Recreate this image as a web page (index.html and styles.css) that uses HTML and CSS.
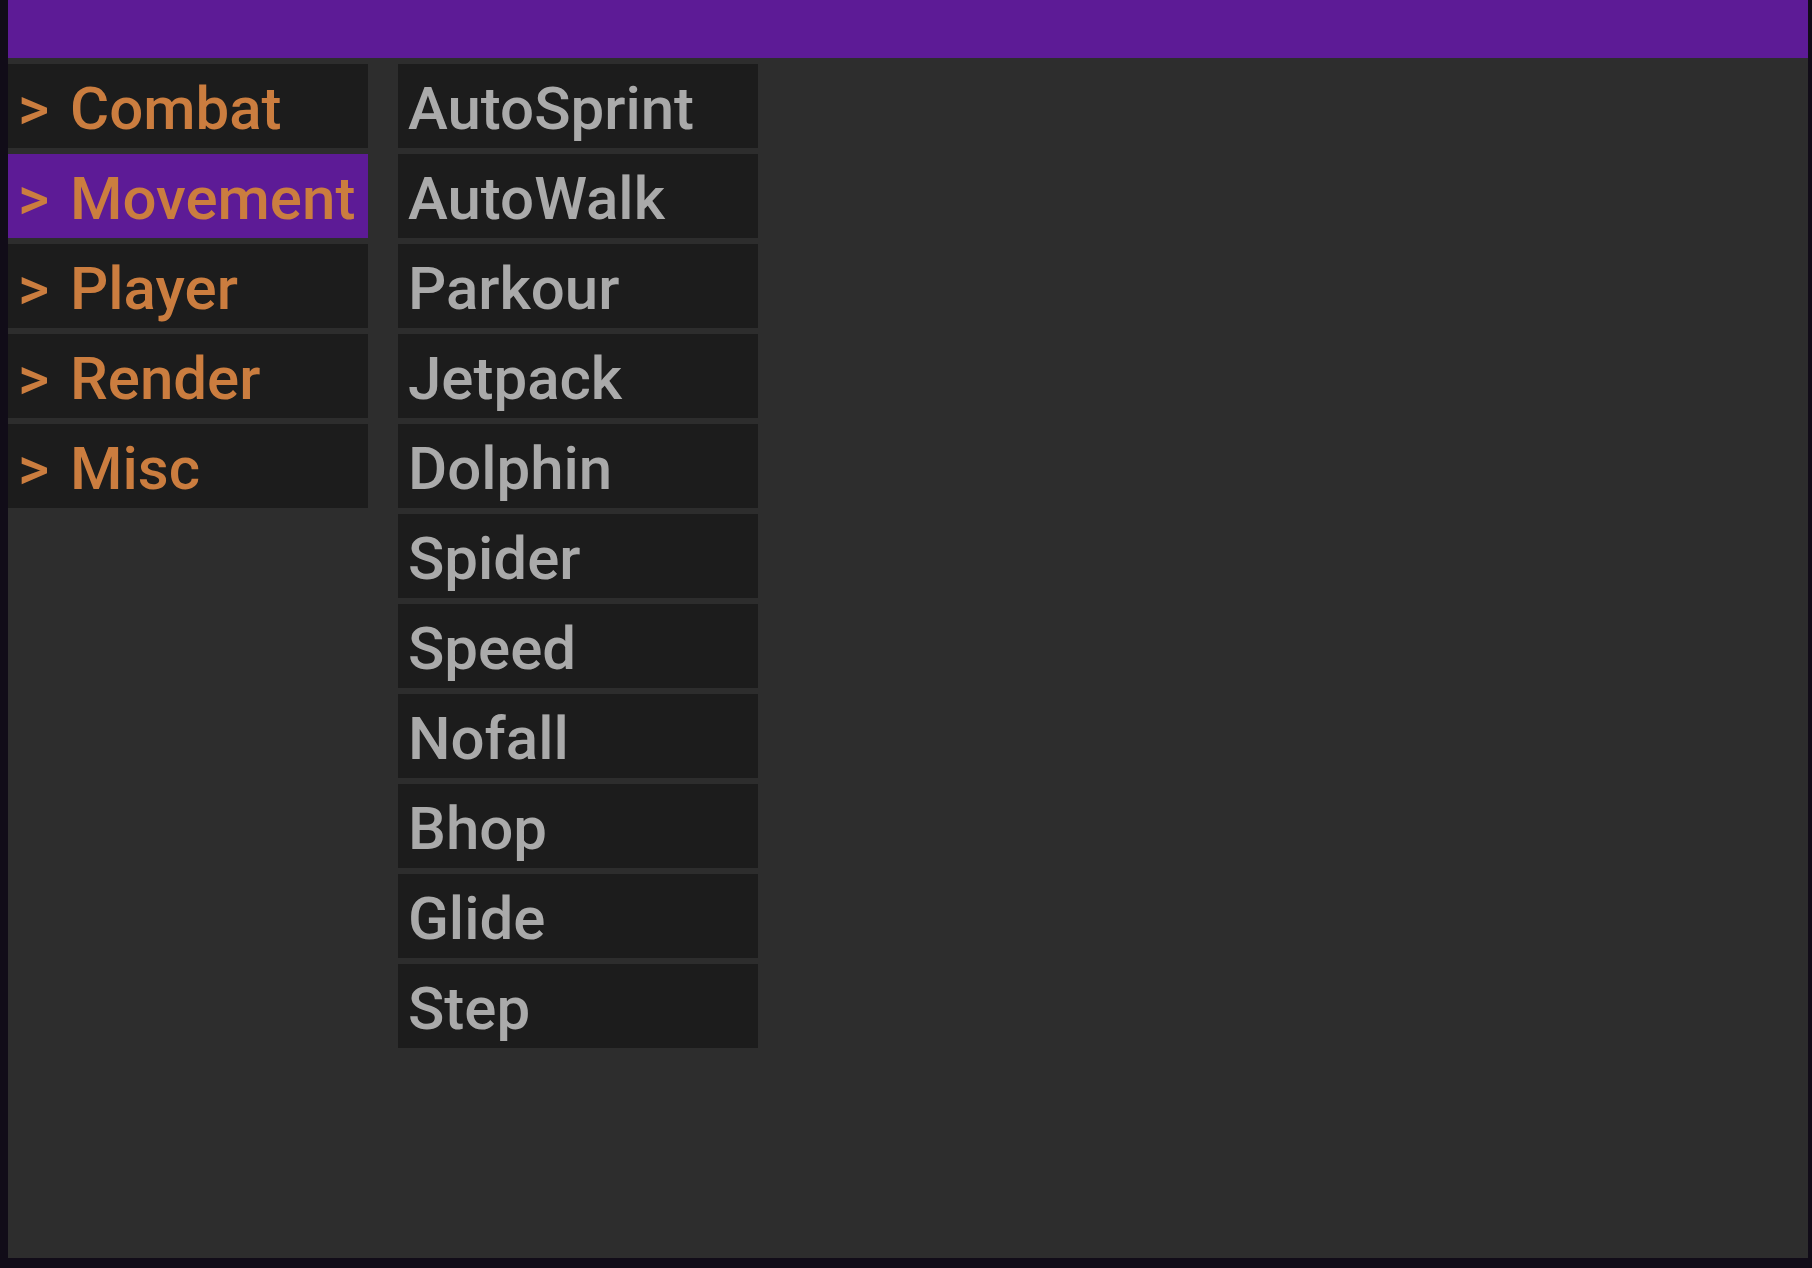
FILE: index.html
```html
<!DOCTYPE html>
<html lang="en">
<head>
    <meta charset="UTF-8">
    <title>Modules</title>
    <link rel="stylesheet" href="styles.css">
</head>
<body>
    <div class="window">
        <header class="title-bar"></header>
        <main class="columns">
            <nav class="column categories">
                <button type="button" class="row"><span class="arrow">&gt;</span>Combat</button>
                <button type="button" class="row active"><span class="arrow">&gt;</span>Movement</button>
                <button type="button" class="row"><span class="arrow">&gt;</span>Player</button>
                <button type="button" class="row"><span class="arrow">&gt;</span>Render</button>
                <button type="button" class="row"><span class="arrow">&gt;</span>Misc</button>
            </nav>
            <div class="column modules">
                <button type="button" class="row">AutoSprint</button>
                <button type="button" class="row">AutoWalk</button>
                <button type="button" class="row">Parkour</button>
                <button type="button" class="row">Jetpack</button>
                <button type="button" class="row">Dolphin</button>
                <button type="button" class="row">Spider</button>
                <button type="button" class="row">Speed</button>
                <button type="button" class="row">Nofall</button>
                <button type="button" class="row">Bhop</button>
                <button type="button" class="row">Glide</button>
                <button type="button" class="row">Step</button>
            </div>
        </main>
    </div>
</body>
</html>
```

FILE: styles.css
```css
* {
    box-sizing: border-box;
}

body {
    display: flex;
    min-height: 100vh;
    margin: 0;
    padding: 0 4px 10px 8px;
    background-color: #110c18;
    font-family: Roboto, sans-serif;
}

.window {
    flex: 1;
    background-color: #2d2d2d;
}

.title-bar {
    height: 58px;
    background-color: #5d1b96;
}

.columns {
    display: flex;
    gap: 30px;
    padding-top: 6px;
}

.column {
    display: flex;
    flex-direction: column;
    gap: 6px;
    width: 360px;
}

.row {
    display: flex;
    align-items: center;
    height: 84px;
    padding: 6px 0 0 10px;
    border: none;
    background-color: #1c1c1c;
    font-family: inherit;
    font-size: 60px;
    font-weight: 500;
    line-height: 72px;
    text-align: left;
    cursor: pointer;
}

.categories .row {
    color: #cb7d3f;
}

.modules .row {
    color: #aaaaaa;
}

.row.active {
    background-color: #5d1b96;
}

.arrow {
    width: 52px;
}
```
